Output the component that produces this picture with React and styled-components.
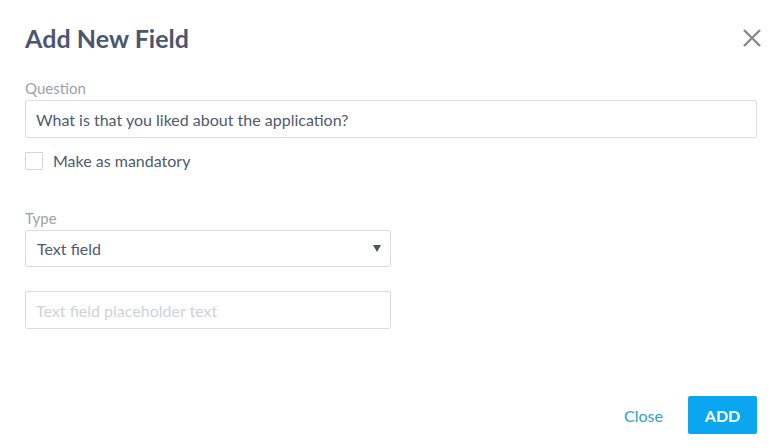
import React from "react";
import styled, { createGlobalStyle } from "styled-components";

const Global = createGlobalStyle`
  html, body { margin: 0; padding: 0; background: #fff; }
  body { font-family: Lato, "Open Sans", sans-serif; }
  * { box-sizing: border-box; }
`;

const Dialog = styled.div`
  width: 780px;
  height: 448px;
  padding: 0 23px 0 25px;
  display: flex;
  flex-direction: column;
  background: #fff;
`;

const Header = styled.div`
  display: flex;
  justify-content: space-between;
  align-items: flex-start;
  padding-top: 23px;
  height: 78px;
`;

const Title = styled.h1`
  margin: 0;
  font-size: 25px;
  line-height: 30px;
  font-weight: 700;
  color: #4b5670;
  letter-spacing: 0.05px;
`;

const CloseIcon = styled.button`
  border: 0;
  background: none;
  padding: 0;
  margin: 4px -6px 0 0;
  width: 22px;
  height: 22px;
  cursor: pointer;
  display: flex;
  align-items: center;
  justify-content: center;
`;

const Field = styled.div`
  display: flex;
  flex-direction: column;
  width: ${(p) => p.$width || "100%"};
  margin-top: ${(p) => p.$mt || 0}px;
`;

const Label = styled.label`
  font-size: 15px;
  line-height: 20px;
  color: #9ca2ad;
  margin-bottom: 2px;
`;

const TextInput = styled.input`
  height: 38px;
  width: 100%;
  border: 1px solid #dcdcdc;
  border-radius: 2px;
  padding: 0 10px;
  font-family: Lato, "Open Sans", sans-serif;
  font-size: 16px;
  color: #505a6e;
  outline: none;
  &::placeholder { color: #cfd2d8; }
`;

const CheckRow = styled.label`
  display: flex;
  align-items: center;
  gap: 10px;
  margin-top: 13px;
  font-size: 16px;
  color: #505a6e;
`;

const Box = styled.span`
  width: 18px;
  height: 18px;
  border: 1px solid #d6d6d6;
  border-radius: 1px;
  background: #fff;
`;

const SelectBox = styled.div`
  height: 37px;
  border: 1px solid #dcdcdc;
  border-radius: 2px;
  display: flex;
  align-items: center;
  justify-content: space-between;
  padding: 0 9px 0 11px;
  font-size: 16px;
  color: #505a6e;
`;

const Arrow = styled.span`
  width: 0;
  height: 0;
  border-left: 4px solid transparent;
  border-right: 4px solid transparent;
  border-top: 7px solid #4b5466;
`;

const Footer = styled.div`
  margin-top: auto;
  display: flex;
  justify-content: flex-end;
  align-items: center;
  gap: 25px;
  padding-bottom: 14px;
`;

const LinkButton = styled.button`
  border: 0;
  background: none;
  padding: 0;
  font-family: Lato, "Open Sans", sans-serif;
  font-size: 16px;
  color: #1f9fe0;
  cursor: pointer;
`;

const PrimaryButton = styled.button`
  border: 0;
  border-radius: 2px;
  background: #0aa6f0;
  color: #fff;
  width: 69px;
  height: 38px;
  font-family: Lato, "Open Sans", sans-serif;
  font-weight: 700;
  font-size: 16px;
  cursor: pointer;
`;

export default function App() {
  return (
    <>
      <Global />
      <Dialog>
        <Header>
          <Title>Add New Field</Title>
          <CloseIcon aria-label="close">
            <svg width="20" height="20" viewBox="0 0 20 20">
              <path d="M2 2 L18 18 M18 2 L2 18" stroke="#8a8a8a" strokeWidth="2.4" fill="none" />
            </svg>
          </CloseIcon>
        </Header>
        <Field>
          <Label>Question</Label>
          <TextInput defaultValue="What is that you liked about the application?" />
        </Field>
        <CheckRow>
          <Box />
          Make as mandatory
        </CheckRow>
        <Field $width="366px" $mt={38}>
          <Label>Type</Label>
          <SelectBox>
            Text field
            <Arrow />
          </SelectBox>
        </Field>
        <Field $width="366px" $mt={24}>
          <TextInput placeholder="Text field placeholder text" />
        </Field>
        <Footer>
          <LinkButton>Close</LinkButton>
          <PrimaryButton>ADD</PrimaryButton>
        </Footer>
      </Dialog>
    </>
  );
}
